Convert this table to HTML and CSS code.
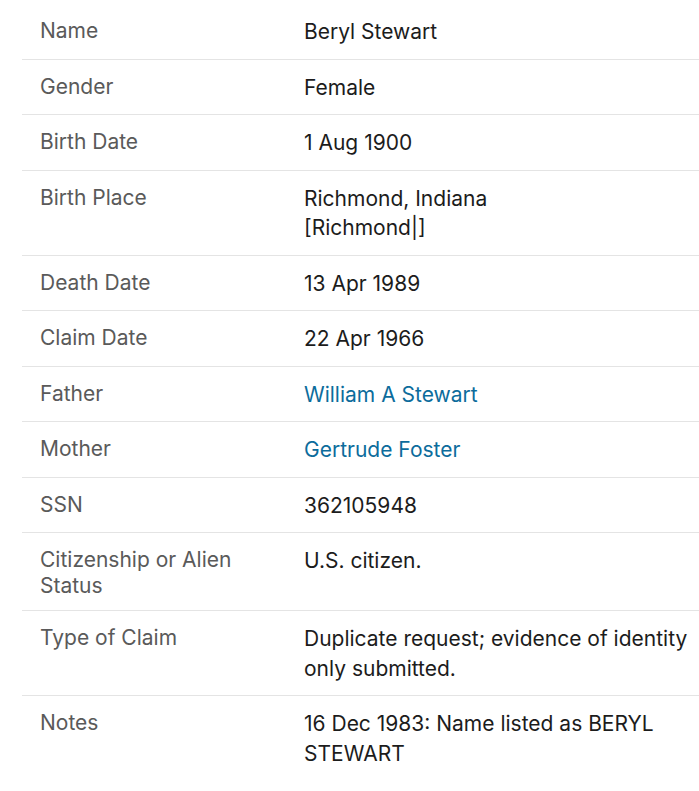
FILE: index.html
```html
<!DOCTYPE html>
<html lang="en">
<head>
<meta charset="utf-8">
<title>Record</title>
<link rel="stylesheet" href="styles.css">
</head>
<body>
<table class="facts">
  <tbody>
    <tr><th>Name</th><td>Beryl Stewart</td></tr>
    <tr><th>Gender</th><td>Female</td></tr>
    <tr><th>Birth Date</th><td>1 Aug 1900</td></tr>
    <tr><th>Birth Place</th><td>Richmond, Indiana<br>[Richmond|]</td></tr>
    <tr><th>Death Date</th><td>13 Apr 1989</td></tr>
    <tr><th>Claim Date</th><td>22 Apr 1966</td></tr>
    <tr><th>Father</th><td><a class="link" href="#">William A Stewart</a></td></tr>
    <tr><th>Mother</th><td><a class="link" href="#">Gertrude Foster</a></td></tr>
    <tr><th>SSN</th><td>362105948</td></tr>
    <tr><th>Citizenship or Alien Status</th><td>U.S. citizen.</td></tr>
    <tr><th>Type of Claim</th><td>Duplicate request; evidence of identity only submitted.</td></tr>
    <tr class="last"><th>Notes</th><td>16 Dec 1983: Name listed as BERYL STEWART</td></tr>
  </tbody>
</table>
</body>
</html>
```
FILE: styles.css
```css
html, body {
  margin: 0;
  padding: 0;
  background: #ffffff;
}
body {
  font-family: Inter, "Noto Sans", sans-serif;
}
.facts {
  margin: 4px 0 0 22px;
  width: 700px;
  border-collapse: collapse;
}
.facts tr {
  border-bottom: 1px solid #e4e4e4;
}
.facts tr.last {
  border-bottom: none;
}
.facts th {
  width: 240px;
  text-align: left;
  vertical-align: top;
  font-weight: 400;
  font-size: 21px;
  line-height: 26px;
  color: #5a5a5a;
  padding: 14px 24px 11px 18px;
}
.facts td {
  vertical-align: top;
  font-size: 21px;
  line-height: 29.5px;
  color: #1c1c1c;
  padding: 13px 14px 12px 0;
}
.link {
  color: #0c6c9c;
  text-decoration: none;
}
```
